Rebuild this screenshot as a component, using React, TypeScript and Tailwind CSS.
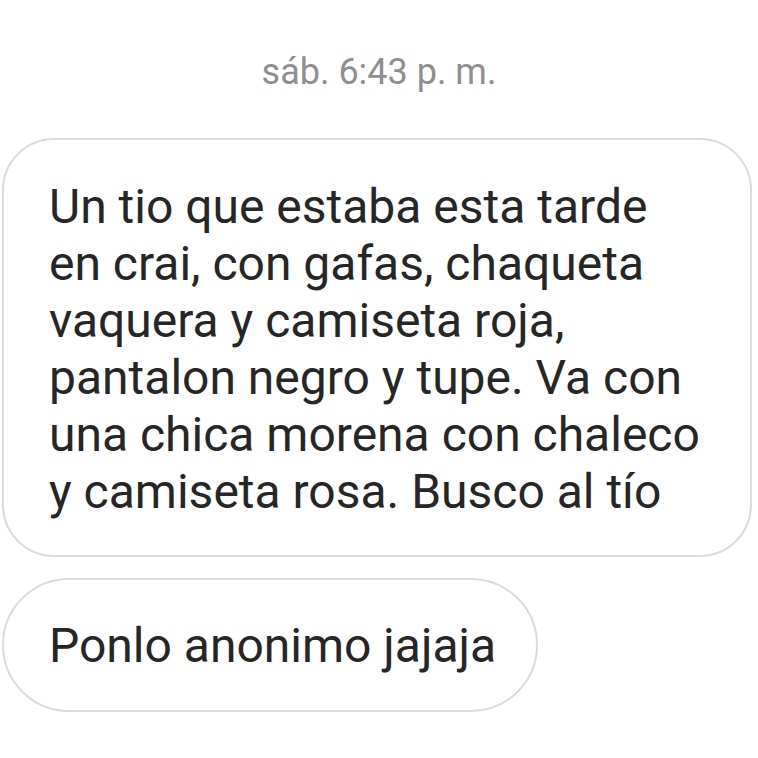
export default function App() {
  const lines = [
    "Un tio que estaba esta tarde",
    "en crai, con gafas, chaqueta",
    "vaquera y camiseta roja,",
    "pantalon negro y tupe. Va con",
    "una chica morena con chaleco",
    "y camiseta rosa. Busco al tío",
  ];

  return (
    <div className="w-[758px] h-[758px] bg-white overflow-hidden font-['Roboto',sans-serif] text-[#262626]">
      <div className="h-[138px] flex justify-center pt-[50px]">
        <p className="text-[36px] leading-[44px] text-[#8e8e8e]">sáb. 6:43 p. m.</p>
      </div>
      <div className="pl-[2px] flex flex-col items-start gap-[21px]">
        <div className="w-[750px] h-[419px] rounded-[52px] border-2 border-[#dbdbdb] pl-[45px] pt-[38px]">
          {lines.map((l) => (
            <p key={l} className="text-[48px] leading-[57px] whitespace-nowrap">
              {l}
            </p>
          ))}
        </div>
        <div className="w-[536px] h-[134px] rounded-[67px] border-2 border-[#dbdbdb] pl-[45px] flex items-center">
          <p className="text-[48px] leading-[57px] whitespace-nowrap">Ponlo anonimo jajaja</p>
        </div>
      </div>
    </div>
  );
}
